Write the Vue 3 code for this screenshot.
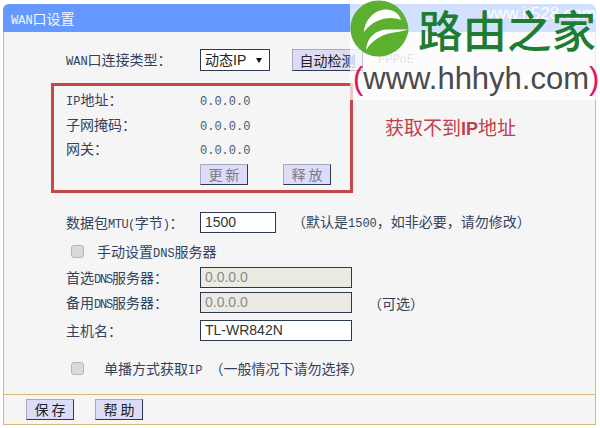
<template>
  <div class="page">
    <div class="panel">
      <div class="title">
        <span><span class="lat">WAN</span>口设置</span>
        <span class="mark-text">www.it528.com</span>
      </div>
      <div class="body">
        <div class="row type-row">
          <span class="label"><span class="lat">WAN</span>口连接类型：</span>
          <span class="select">动态IP<i class="arrow"></i></span>
          <button class="btn detect">自动检测</button>
          <span class="pppoe">PPPoE</span>
        </div>
        <div class="status-box">
          <div class="status-row">
            <span class="label"><span class="lat">IP</span>地址：</span>
            <span class="ip">0.0.0.0</span>
          </div>
          <div class="status-row">
            <span class="label">子网掩码：</span>
            <span class="ip">0.0.0.0</span>
          </div>
          <div class="status-row">
            <span class="label">网关：</span>
            <span class="ip">0.0.0.0</span>
          </div>
          <div class="status-btns">
            <button class="btn wide">更 新</button>
            <button class="btn wide">释 放</button>
          </div>
          <div class="warn">获取不到<b>IP</b>地址</div>
        </div>
        <div class="row mtu-row">
          <span class="label">数据包<span class="lat sm">MTU(</span>字节<span class="lat sm">)</span>：</span>
          <span class="input mtu">1500</span>
          <span class="note">（默认是<span class="lat">1500</span>，如非必要，请勿修改）</span>
        </div>
        <div class="check-row dns-check">
          <span class="check"></span>
          <span class="check-text">手动设置<span class="lat">DNS</span>服务器</span>
        </div>
        <div class="row dns first">
          <span class="label">首选<span class="lat xs">DNS</span>服务器：</span>
          <span class="input off">0.0.0.0</span>
        </div>
        <div class="row dns">
          <span class="label">备用<span class="lat xs">DNS</span>服务器：</span>
          <span class="input off">0.0.0.0</span>
          <span class="note">（可选）</span>
        </div>
        <div class="row host">
          <span class="label">主机名：</span>
          <span class="input">TL-WR842N</span>
        </div>
        <div class="check-row uni-check">
          <span class="check"></span>
          <span class="check-text uni">单播方式获取<span class="lat">IP </span>（一般情况下请勿选择）</span>
        </div>
      </div>
      <div class="foot">
        <button class="btn wide">保 存</button>
        <button class="btn wide">帮 助</button>
      </div>
    </div>

    <div class="logo">
      <div class="logo-top">
        <svg class="mark" width="60" height="60" viewBox="0 0 60 60">
          <path fill="#5cb030" d="M58.500 31C57.500 14 45 1.500 28.500 1.500 13 1.500 0.500 14 0.500 29.500 0.500 45 13 57.500 28.500 57.500 43 57.500 56 47 58.500 31z" />
          <path fill="#fff" d="M14 33C15 20 25 10.500 36 10.500 43 10.500 49 14 51 21 42 17 25 18 14 33z" />
          <path fill="#fff" d="M16 51C17 38 26 30.500 38 30.500L59 30.500C53 32 47 33 41 34 30 36 22 42 16 51z" />
        </svg>
        <span class="brand">路由之家</span>
      </div>
      <div class="url"><em>(</em>www.hhhyh.com<em>)</em></div>
    </div>
  </div>
</template>

<script setup>
</script>

<style>
html, body {
  margin: 0;
  background: #fff;
}
</style>

<style scoped>
.page {
  position: relative;
  width: 600px;
  height: 428px;
  overflow: hidden;
  padding: 4px 4px 3px 3px;
  box-sizing: border-box;
  font-family: "Noto Sans CJK SC", "DejaVu Sans", sans-serif;
  font-size: 14px;
  color: #33435c;
}

.lat {
  font-family: "Liberation Mono", monospace;
  font-size: 12px;
  white-space: pre;
}

.lat.sm {
  letter-spacing: -0.5px;
}

.lat.xs {
  letter-spacing: -1.2px;
}

.panel {
  height: 100%;
  display: flex;
  flex-direction: column;
  background: #f5f5f6;
  border: 1px solid #d8b878;
  border-top: 0;
  border-radius: 6px 6px 0 0;
  box-sizing: border-box;
}

.title {
  height: 28px;
  margin: 0 -1px;
  padding-left: 8px;
  line-height: 28px;
  background: #6699ff;
  color: #f4f7ff;
  border-radius: 6px 6px 0 0;
  display: flex;
  justify-content: space-between;
}

.mark-text {
  font-family: "Liberation Sans", sans-serif;
  font-size: 17px;
  line-height: 20px;
  color: #fff;
}

.body {
  flex: 1;
  padding-left: 62px;
  border-bottom: 1px solid #d8b878;
}

.row {
  display: flex;
  align-items: center;
  height: 21px;
  line-height: 20px;
}

.label {
  width: 134px;
  flex: none;
  height: 20px;
  margin-top: -2px;
}

.type-row {
  margin-top: 17px;
  height: 22px;
}

.select {
  width: 70px;
  height: 22px;
  border: 1px solid #2c3a50;
  background: #fff;
  padding-left: 4px;
  box-sizing: border-box;
  font-family: "Liberation Sans", "Noto Sans CJK SC", sans-serif;
  display: flex;
  align-items: center;
  justify-content: space-between;
  color: #222;
}

.arrow {
  width: 0;
  height: 0;
  border: 3px solid transparent;
  border-top: 5px solid #111;
  border-bottom: 0;
  margin-right: 7px;
}

.btn {
  background: #dcdcf6;
  border: 1px solid #2c3a50;
  border-color: #a8a8c0 #2c3a50 #2c3a50 #a8a8c0;
  font: inherit;
  color: #222;
  padding: 0;
  height: 21px;
  line-height: 19px;
}

.detect {
  width: 71px;
  height: 22px;
  margin-left: 22px;
}

.pppoe {
  margin-left: 15px;
  font-family: "Liberation Mono", monospace;
  font-size: 12px;
  color: #a0a0ac;
}

.status-box {
  position: relative;
  width: 302px;
  height: 110px;
  margin: 12px 0 0 -15px;
  padding: 2px 0 0 12px;
  border: 3px solid #c44848;
  box-sizing: border-box;
}

.status-row {
  height: 24.5px;
  display: flex;
  align-items: center;
  line-height: 20px;
}

.ip {
  margin-top: 4px;
  font-family: "Liberation Mono", monospace;
  font-size: 12px;
  color: #4a5a70;
}

.status-btns {
  display: flex;
  gap: 35px;
  margin: 2px 0 0 134px;
}

.status-btns .btn {
  width: 48px;
  color: #7a7a88;
}

.warn {
  position: absolute;
  left: 331px;
  top: 31px;
  line-height: 20px;
  white-space: nowrap;
  font-size: 19px;
  color: #c0404c;
}

.warn b {
  font-family: "Liberation Sans", sans-serif;
  font-size: 18px;
  font-weight: 700;
}

.mtu-row {
  margin-top: 19px;
}

.input {
  width: 152px;
  height: 21px;
  border: 1px solid #2c3a50;
  background: #fff;
  box-sizing: border-box;
  padding-left: 4px;
  line-height: 19px;
  font-family: "Liberation Sans", sans-serif;
  color: #333;
}

.input.mtu {
  width: 76px;
}

.input.off {
  background: #ebebe4;
  color: #8a8a8a;
}

.note {
  margin-left: 16px;
}

.check-row {
  display: flex;
  align-items: center;
  height: 20px;
  line-height: 20px;
}

.check {
  width: 13px;
  height: 13px;
  border: 1px solid #b4b4b4;
  border-radius: 3px;
  background: #dadada;
  box-sizing: border-box;
}

.dns-check {
  margin: 8px 0 0 5px;
}

.check-text {
  margin-left: 13px;
  height: 20px;
}

.check-text.uni {
  margin-left: 20px;
}

.dns {
  margin-top: 4px;
}

.dns.first {
  margin-top: 6px;
}

.host {
  margin-top: 7px;
}

.uni-check {
  margin: 17px 0 0 5px;
}

.foot {
  height: 29px;
  flex: none;
  display: flex;
  align-items: center;
  gap: 21px;
  padding-left: 22px;
}

.foot .btn {
  width: 48px;
}

.logo {
  position: absolute;
  left: 350px;
  top: 0;
  width: 246px;
  height: 100px;
  background: rgba(255, 255, 255, 0.7);
}

.logo-top {
  display: flex;
  align-items: center;
  height: 58px;
}

.mark {
  flex: none;
}

.brand {
  font-size: 44.5px;
  line-height: 58px;
  white-space: nowrap;
  margin-left: 8px;
  color: #1f7d33;
  font-weight: 500;
}

.url {
  margin-top: 3px;
  font-family: "Liberation Sans", sans-serif;
  font-size: 31px;
  line-height: 36px;
  color: #4a4a4a;
  white-space: nowrap;
  margin-left: 3px;
}

.url em {
  font-style: normal;
  color: #e0185c;
}
</style>
